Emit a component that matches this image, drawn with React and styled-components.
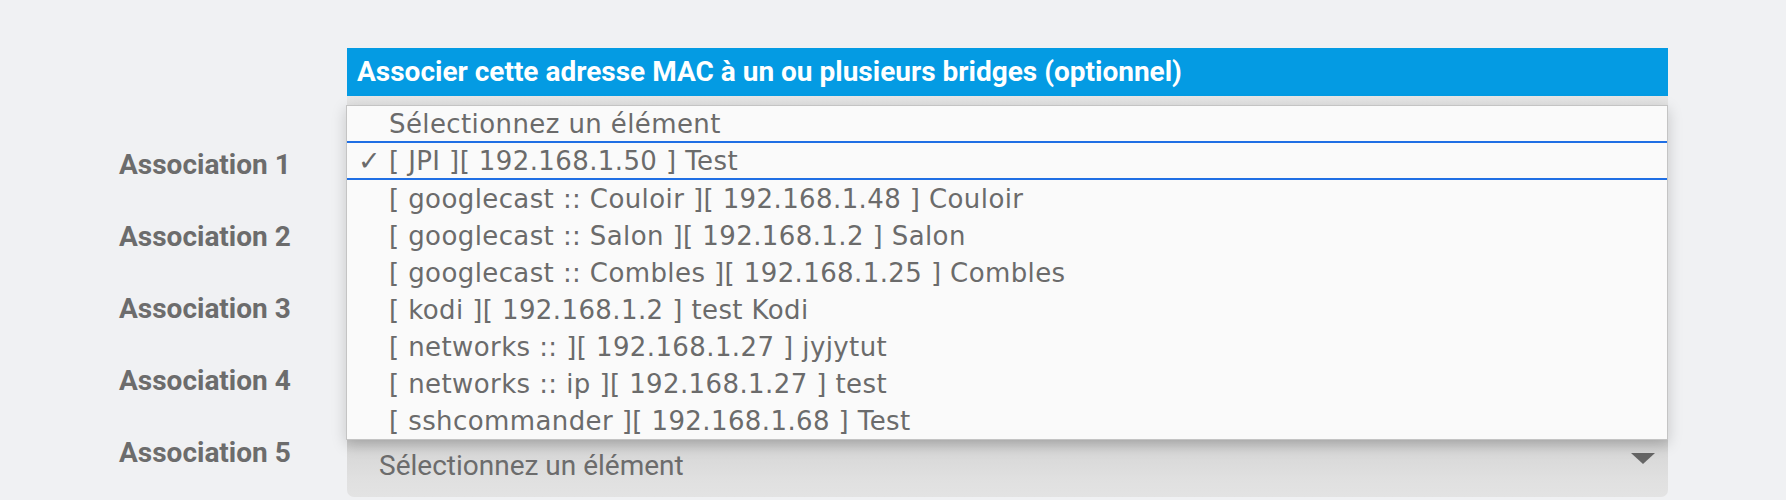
import React from 'react';
import styled, { createGlobalStyle } from 'styled-components';

const GlobalStyle = createGlobalStyle`
  html, body {
    margin: 0;
    padding: 0;
    background: #f0f1f3;
  }
`;

const options = [
  '[ JPI ][ 192.168.1.50 ] Test',
  '[ googlecast :: Couloir ][ 192.168.1.48 ] Couloir',
  '[ googlecast :: Salon ][ 192.168.1.2 ] Salon',
  '[ googlecast :: Combles ][ 192.168.1.25 ] Combles',
  '[ kodi ][ 192.168.1.2 ] test Kodi',
  '[ networks :: ][ 192.168.1.27 ] jyjytut',
  '[ networks :: ip ][ 192.168.1.27 ] test',
  '[ sshcommander ][ 192.168.1.68 ] Test',
];

const App = () => {
  return (
    <Page>
      <GlobalStyle />
      <Form>
        <HeaderRow>
          <Spacer />
          <SectionTitle>Associer cette adresse MAC à un ou plusieurs bridges (optionnel)</SectionTitle>
        </HeaderRow>
        <FieldArea>
          <TopStrip />
          {[1, 2, 3, 4, 5].map((n) => (
            <FieldRow key={n}>
              <Label>Association {n}</Label>
              <Select>
                {/* selects 1-4 sit under the open list */}
                {n === 5 && <SelectText>Sélectionnez un élément</SelectText>}
                {n === 5 && <Arrow />}
              </Select>
            </FieldRow>
          ))}
          <Popup>
            <Option $first>
              <Check />
              Sélectionnez un élément
            </Option>
            {options.map((o, i) => (
              <Option key={o} $selected={i === 0}>
                <Check>{i === 0 ? '✓' : ''}</Check>
                {o}
              </Option>
            ))}
          </Popup>
        </FieldArea>
      </Form>
    </Page>
  );
};

const Page = styled.div`
  width: 1786px;
  height: 500px;
  overflow: hidden;
  background: #f0f1f3;
  font-family: Roboto, 'Liberation Sans', sans-serif;
`;

const Form = styled.div`
  padding-top: 48px;
  display: flex;
  flex-direction: column;
`;

const HeaderRow = styled.div`
  display: flex;
`;

const Spacer = styled.div`
  width: 347px;
  flex-shrink: 0;
`;

const SectionTitle = styled.div`
  width: 1321px;
  height: 48px;
  background: #049be3;
  color: #fff;
  font-weight: 700;
  font-size: 28px;
  line-height: 48px;
  padding-left: 10px;
  box-sizing: border-box;
  white-space: nowrap;
`;

const FieldArea = styled.div`
  position: relative;
  display: flex;
  flex-direction: column;
  gap: 14px;
`;

const TopStrip = styled.div`
  margin-left: 347px;
  width: 1321px;
  height: 40px;
  background: linear-gradient(#e6e6e6, #dcdcdc);
  border-bottom: 1px solid #b8b8b8;
`;

const FieldRow = styled.div`
  display: flex;
  align-items: flex-start;
  height: 58px;
`;

const Label = styled.div`
  width: 228px;
  margin-left: 119px;
  font-weight: 700;
  font-size: 28px;
  color: #6c6c6c;
  line-height: 28px;
  white-space: nowrap;
`;

const Select = styled.div`
  width: 1321px;
  height: 58px;
  box-sizing: border-box;
  border-radius: 0 0 7px 7px;
  background: linear-gradient(#c6c6c6 0px, #d8d8d8 14px, #e0e0e0 40px, #e3e3e3 100%);
  display: flex;
  align-items: flex-start;
  justify-content: space-between;
  padding: 0 12px 0 32px;
`;

const SelectText = styled.span`
  font-size: 28px;
  line-height: 33px;
  color: #6c6c6c;
  padding-top: 10px;
`;

const Arrow = styled.span`
  width: 0;
  height: 0;
  border-left: 12px solid transparent;
  border-right: 12px solid transparent;
  border-top: 11px solid #666;
  margin-right: 1px;
  margin-top: 14px;
`;

const Popup = styled.div`
  position: absolute;
  top: 9px;
  left: 346px;
  width: 1322px;
  box-sizing: border-box;
  background: #fafafa;
  border: 1px solid #c4c4c4;
  box-shadow: 0 4px 14px rgba(0, 0, 0, 0.18);
  font-family: 'DejaVu Sans', Verdana, sans-serif;
  font-size: 26px;
  letter-spacing: 0.4px;
  color: #6b6b6b;
`;

const Option = styled.div`
  height: 37px;
  box-sizing: border-box;
  display: flex;
  align-items: center;
  border-bottom: ${(p) => (p.$first || p.$selected ? '2px solid #1f6fe4' : 'none')};
  white-space: nowrap;
`;

const Check = styled.span`
  width: 42px;
  padding-left: 11px;
  box-sizing: border-box;
  flex-shrink: 0;
  font-size: 27px;
`;

export default App;
